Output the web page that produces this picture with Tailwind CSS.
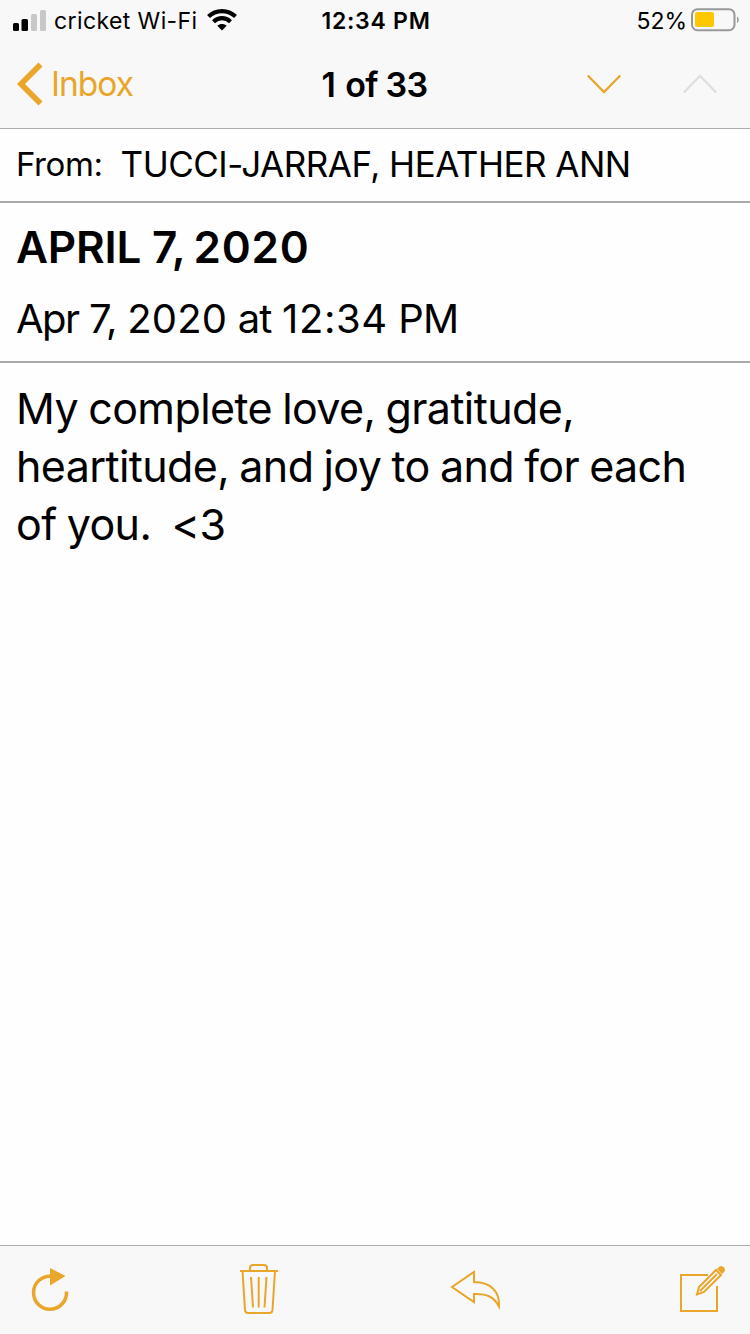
<!DOCTYPE html>
<html lang="en">
<head>
<meta charset="utf-8">
<title>Mail</title>
<script src="https://cdn.jsdelivr.net/npm/@tailwindcss/browser@4"></script>
</head>
<body class="bg-white">
<div class="flex h-[1334px] w-[750px] flex-col overflow-hidden bg-[#fefefe] font-['Inter',sans-serif] text-black whitespace-nowrap">
  <header class="h-[129px] shrink-0 border-b border-[#acacae] bg-[#f8f8f8]">
    <div class="grid h-[42px] grid-cols-3 items-center pl-[13px] pr-[11px]">
      <div class="flex items-center">
        <svg class="mb-[1px] h-[22px] w-[34px]" viewBox="0 0 34 22">
          <rect x="0" y="13" width="6" height="8" rx="1.5"/><rect x="8.500" y="9" width="6.500" height="12" rx="1.5"/>
          <rect x="18" y="4" width="6" height="17" rx="1.5" fill="#c8c8c8"/><rect x="27" y="0" width="6" height="21" rx="1.5" fill="#c8c8c8"/>
        </svg>
        <span class="ml-[7px] text-[23px] tracking-[0.4px]">cricket Wi-Fi</span>
        <svg class="mb-[2px] ml-[9px] h-[22px] w-[30px]" viewBox="0 0 30 22">
          <g fill="none" stroke="#000" stroke-width="4.2"><path d="M1.5 7.6C9 .3 21 .3 28.500 7.600"/><path d="M6.500 12.700C11.500 8 18.500 8 23.500 12.700"/></g>
          <path d="M15 21.500L10.300 16.800C13 14.500 17 14.500 19.700 16.800Z"/>
        </svg>
      </div>
      <div class="text-center text-[23px] font-semibold tracking-[0.75px]">12:34 PM</div>
      <div class="flex items-center justify-end">
        <span class="text-[23px]">52%</span>
        <svg class="mb-[2px] ml-[4px] h-[24px] w-[48px]" viewBox="0 0 48 24">
          <rect x="1" y="1.200" width="42.500" height="21" rx="5.500" fill="none" stroke="#98989b" stroke-width="2"/>
          <rect x="4" y="4" width="19" height="15" rx="2" fill="#fdc800"/>
          <path d="M46 8.500C48.300 9 48.300 14.500 46 15Z" fill="#98989b"/>
        </svg>
      </div>
    </div>
    <div class="grid h-[86px] grid-cols-3 items-center pb-[2px] pl-[17px] pr-[33px]">
      <div class="flex items-center text-[#e9a62b]">
        <svg class="h-[44px] w-[26px]" viewBox="0 0 26 44"><path d="M23.500 2.500L4 22L23.500 41.500" fill="none" stroke="currentColor" stroke-width="5.700"/></svg>
        <span class="ml-[8px] pt-[1px] text-[33.500px] tracking-[-1px]">Inbox</span>
      </div>
      <div class="ml-[15px] text-center text-[34px] font-semibold tracking-[-0.7px]"><span class="mr-[2px]">1</span> of 33</div>
      <div class="flex items-center justify-end gap-[62px] pb-[1px]">
        <svg class="h-[20px] w-[34px]" viewBox="0 0 34 20"><path d="M.8 1.500L17 18L33.200 1.500" fill="none" stroke="#e9a62b" stroke-width="2.300"/></svg>
        <svg class="h-[20px] w-[34px]" viewBox="0 0 34 20"><path d="M.8 18.500L17 2L33.200 18.500" fill="none" stroke="#dfdfdf" stroke-width="2.300"/></svg>
      </div>
    </div>
  </header>
  <div class="flex h-[74px] shrink-0 items-center border-b-2 border-[#a8a8aa] px-[16px] pb-[1px]">
    <span class="text-[33px] tracking-[-0.4px]">From:</span>
    <span class="ml-[18px] text-[35px] tracking-[-0.5px]">TUCCI-JARRAF, HEATHER ANN</span>
  </div>
  <div class="h-[160px] shrink-0 border-b-2 border-[#a8a8aa] px-[16px] pt-[14px]">
    <h1 class="text-[44px] leading-[60px] font-semibold tracking-[-0.2px]">APRIL 7, <span class="-ml-[2px] tracking-[0.8px]">2020</span></h1>
    <p class="mt-[12px] text-[40px] leading-[60px] tracking-[-0.8px]"><span class="tracking-[-1.5px]">Apr</span> 7, <span class="tracking-[0.2px]">2020</span> at <span class="tracking-[0.6px]">12:34</span> PM</p>
  </div>
  <main class="grow px-[16px] pt-[16px] text-[43px] leading-[58px] tracking-[-0.6px] [word-spacing:-1.3px]">
    <p>My complete love, gratitude,</p>
    <p>heartitude, and joy to and for each</p>
    <p>of you.&nbsp; &lt;3</p>
  </main>
  <footer class="flex h-[89px] shrink-0 items-start border-t border-[#acacae] bg-[#f8f8f8] pl-[31px] pt-[16px] text-[#e9a62b]">
    <svg class="h-[52px] w-[38px]" viewBox="0 0 38 52"><path d="M20 14.200A16.500 16.500 0 1 0 35.500 29.500" fill="none" stroke="currentColor" stroke-width="3.500"/><path d="M19 6L34.500 14L19 23.500Z" fill="currentColor"/></svg>
    <svg class="ml-[170px] h-[54px] w-[40px]" viewBox="0 0 40 54" fill="none" stroke="currentColor" stroke-width="2"><path d="M1 9H39M11 9V6Q11 3 14 3H25Q28 3 28 6V9M3.500 9L6 48Q6.200 51 9 51H30.500Q33.300 51 33.500 48L36 9M12 15L14 45.500M19.700 15V45.500M27.500 15L25.500 45.500"/></svg>
    <svg class="ml-[171px] h-[52px] w-[52px]" viewBox="0 0 52 52"><path d="M2 25L24 10V20C40 20 50 29 49 44.500C44 35 37 31.500 24 32V40Z" fill="none" stroke="currentColor" stroke-width="2"/></svg>
    <svg class="ml-[177px] h-[52px] w-[48px]" viewBox="0 0 48 52"><path d="M29 13H2V49H38V24" fill="none" stroke="currentColor" stroke-width="2"/><path d="M18 32.500L20 25L37 8L42 13L25 30ZM21 29L38 12" fill="none" stroke="currentColor" stroke-width="2"/><path d="M38 7L40.500 4.500Q43 3 45 5.500Q47 8 45 10L43 12Z" fill="currentColor"/></svg>
  </footer>
</div>
</body>
</html>
